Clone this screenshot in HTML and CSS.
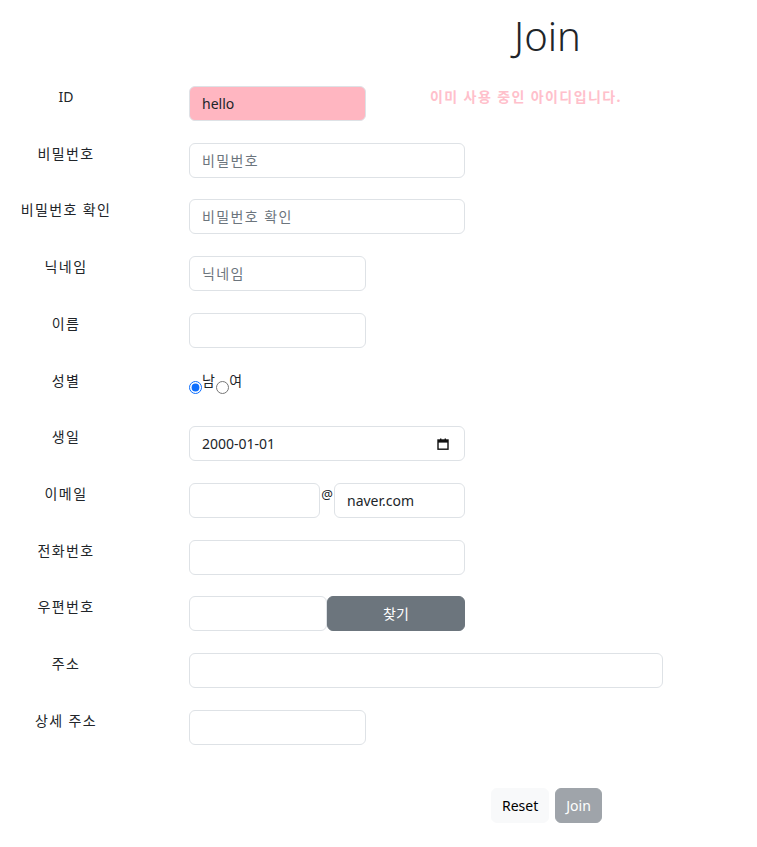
FILE: index.html
```html
<!DOCTYPE html>
<html lang="ko">
<head>
	<meta charset="UTF-8">
	<title>Join</title>
	<link rel="stylesheet" href="styles.css">
</head>
<body>
	<!-- 회원가입 폼 -->
	<form class="join-form" action="#">
		<h1 class="join-title">Join</h1>

		<div class="form-row">
			<label class="form-label latin" for="userId">ID</label>
			<div class="form-field">
				<input class="form-control short id-taken" type="text" id="userId" value="hello">
				<span class="id-msg">이미 사용 중인 아이디입니다.</span>
			</div>
		</div>

		<div class="form-row">
			<label class="form-label" for="pw">비밀번호</label>
			<div class="form-field">
				<input class="form-control wide ko" type="password" id="pw" placeholder="비밀번호">
			</div>
		</div>

		<div class="form-row">
			<label class="form-label" for="pwCheck">비밀번호 확인</label>
			<div class="form-field">
				<input class="form-control wide ko" type="password" id="pwCheck" placeholder="비밀번호 확인">
			</div>
		</div>

		<div class="form-row">
			<label class="form-label" for="nick">닉네임</label>
			<div class="form-field">
				<input class="form-control short ko" type="text" id="nick" placeholder="닉네임">
			</div>
		</div>

		<div class="form-row">
			<label class="form-label" for="name">이름</label>
			<div class="form-field">
				<input class="form-control short" type="text" id="name">
			</div>
		</div>

		<div class="form-row">
			<span class="form-label">성별</span>
			<div class="form-field gender">
				<input class="radio" type="radio" name="gender" id="male" checked><label for="male">남</label><input class="radio" type="radio" name="gender" id="female"><label for="female">여</label>
			</div>
		</div>

		<div class="form-row">
			<label class="form-label" for="birth">생일</label>
			<div class="form-field">
				<!-- 날짜 입력 (yyyy-mm-dd 표시) -->
				<div class="form-control wide date-box">
					<input class="date-input" type="text" id="birth" value="2000-01-01">
					<svg class="cal-icon" width="12" height="12" viewBox="0 0 12 12">
						<rect x="1" y="2" width="10" height="9.2" fill="none" stroke="#111" stroke-width="1.4"/>
						<rect x="1" y="2" width="10" height="2.6" fill="#111"/>
						<rect x="3" y="0.5" width="1.4" height="2" fill="#111"/>
						<rect x="7.6" y="0.5" width="1.4" height="2" fill="#111"/>
					</svg>
				</div>
			</div>
		</div>

		<div class="form-row">
			<label class="form-label" for="email">이메일</label>
			<div class="form-field">
				<input class="form-control half" type="text" id="email">
				<span class="at">@</span>
				<input class="form-control half" type="text" value="naver.com">
			</div>
		</div>

		<div class="form-row">
			<label class="form-label" for="tel">전화번호</label>
			<div class="form-field">
				<input class="form-control wide" type="text" id="tel">
			</div>
		</div>

		<div class="form-row">
			<label class="form-label" for="zip">우편번호</label>
			<div class="form-field">
				<input class="form-control zip" type="text" id="zip">
				<button class="btn btn-secondary zip-btn" type="button">찾기</button>
			</div>
		</div>

		<div class="form-row">
			<label class="form-label" for="addr">주소</label>
			<div class="form-field">
				<input class="form-control full" type="text" id="addr">
			</div>
		</div>

		<div class="form-row">
			<label class="form-label" for="addrDetail">상세 주소</label>
			<div class="form-field">
				<input class="form-control short" type="text" id="addrDetail">
			</div>
		</div>

		<!-- 버튼 -->
		<div class="form-actions">
			<button class="btn btn-light" type="reset">Reset</button>
			<button class="btn btn-secondary" type="submit" disabled>Join</button>
		</div>
	</form>
</body>
</html>
```

FILE: styles.css
```css
*{
	margin: 0;
	padding: 0;
	box-sizing: border-box;
}

body{
	font-family: "Noto Sans", "Noto Sans CJK KR", sans-serif;
	font-size: 14px;
	line-height: 1.5;
	color: #212529;
	background-color: #fff;
}

.join-form{
	width: 757px;
	padding-top: 12px;
}

/*제목*/
.join-title{
	font-size: 40px;
	font-weight: 300;
	line-height: 1.2;
	text-align: center;
	padding-left: 338px;
	margin-bottom: 26px;
}

/*한 줄*/
.form-row{
	display: grid;
	grid-template-columns: 132px 1fr;
	column-gap: 57px;
	height: 35px;
	margin-bottom: 21.73px;
}

.form-label{
	text-align: center;
	letter-spacing: 1.4px;
}

/*영문 라벨은 자간 없음*/
.form-label.latin{
	letter-spacing: 0;
}

.form-field{
	display: flex;
	align-items: flex-start;
}

.gender label{
	letter-spacing: 1.4px;
}

/*입력칸*/
.form-control{
	height: 35px;
	padding: 6px 12px;
	font-family: inherit;
	font-size: 14px;
	line-height: 1.5;
	color: #212529;
	background-color: #fff;
	border: 1px solid #dee2e6;
	border-radius: 6px;
	outline: none;
}

.form-control::placeholder{
	color: #6c757d;
}

.ko::placeholder{
	letter-spacing: 1.4px;
}

.short{ width: 177px; }
.wide{ width: 276px; }
.full{ width: 474px; }
.half{ width: 131px; }
.zip{ width: 138px; }

.id-taken{
	background-color: lightpink;
}

.id-msg{
	margin-left: 64px;
	color: pink;
	font-weight: bold;
	letter-spacing: 1.4px;
}

.at{
	width: 14px;
	font-size: 13px;
	text-align: center;
	padding-top: 2px;
}

/*날짜*/
.date-box{
	display: flex;
	align-items: center;
	padding-right: 15px;
}

.date-input{
	flex: 1;
	min-width: 0;
	border: none;
	outline: none;
	background: transparent;
	font-family: inherit;
	font-size: 14px;
	line-height: 1.5;
	color: #212529;
}

.cal-icon{
	display: block;
}

/*라디오*/
.radio{
	width: 13px;
	height: 13px;
	margin: 11px 0 0 0;
	accent-color: #0d6efd;
}

/*버튼*/
.btn{
	height: 35px;
	padding: 6px 10px;
	font-family: inherit;
	font-size: 14px;
	line-height: 1.5;
	border: 1px solid transparent;
	border-radius: 6px;
	cursor: pointer;
}

.btn-secondary{
	color: #fff;
	background-color: #6c757d;
	border-color: #6c757d;
}

.btn-secondary:disabled{
	opacity: .65;
}

.btn-light{
	color: #000;
	background-color: #f8f9fa;
	border-color: #f8f9fa;
}

.zip-btn{
	width: 138px;
}

.form-actions{
	display: flex;
	gap: 6px;
	padding-left: 491px;
	margin-top: 21px;
	padding-top: 21px;
}
```
